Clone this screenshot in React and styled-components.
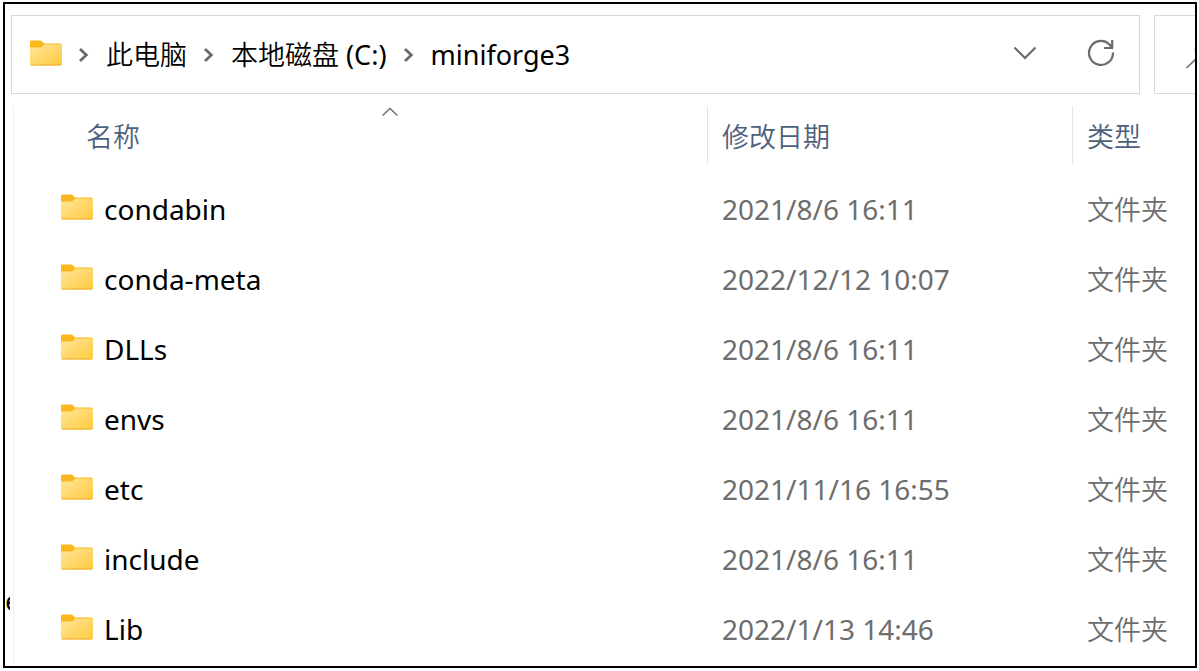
import React from "react";
import styled, { createGlobalStyle } from "styled-components";

const GlobalStyle = createGlobalStyle`
  *, *::before, *::after { box-sizing: border-box; }
  body {
    margin: 0;
    background: #fff;
    color: #000;
    font-family: "Noto Sans", "Noto Sans CJK SC", sans-serif;
    font-size: 28px;
    line-height: 40px;
  }
  button {
    padding: 0;
    border: 0;
    background: none;
    color: inherit;
    font: inherit;
    text-align: left;
    cursor: pointer;
  }
  svg { display: block; flex: none; }
`;

const Page = styled.div`
  padding: 2px 2px 2px 3px;
`;

const Window = styled.main`
  border: 2px solid #000;
  padding: 11px 0 2px;
  overflow: hidden;
`;

const Toolbar = styled.header`
  display: flex;
  gap: 14px;
  padding-left: 6px;
`;

const AddressBar = styled.div`
  flex: 1;
  display: flex;
  align-items: center;
  height: 79px;
  padding: 0 24px 0 18px;
  border: 1px solid #d9d9d9;
`;

const Crumbs = styled.nav`
  flex: 1;
  display: flex;
  align-items: center;
  font-size: 27px;
`;

const Separator = styled.svg`
  margin: 0 17px 0 16px;
`;

const Cjk = styled.span`
  font-family: "Noto Sans CJK SC", sans-serif;
  font-size: 27px;
  font-weight: 350;
`;

const Actions = styled.div`
  display: flex;
  align-items: center;
  gap: 50px;
  padding-bottom: 4px;
`;

const SearchBox = styled.label`
  display: flex;
  align-items: center;
  width: 41px;
  height: 79px;
  padding-left: 30px;
  border: 1px solid #d9d9d9;
  border-right: 0;
  overflow: hidden;
`;

const SearchInput = styled.input`
  width: 0;
  padding: 0;
  border: 0;
`;

const Body = styled.div`
  display: flex;
  padding-top: 12px;
`;

const NavPane = styled.aside`
  width: 5px;
  margin-right: 3px;
  padding-top: 474px;
  overflow: hidden;
`;

const Files = styled.section`
  flex: 1;
  border-left: 1px solid #f0f0f0;
`;

const Table = styled.table`
  width: 100%;
  table-layout: fixed;
  border-collapse: collapse;
`;

const HeadCell = styled.th`
  width: ${(p) => p.$width || "auto"};
  height: 68px;
  padding: 0 0 0 ${(p) => (p.$name ? "57px" : "0")};
  vertical-align: top;
  font-weight: 400;
  color: #4c607a;
`;

const SortButton = styled.button`
  position: relative;
  width: 100%;
  height: 58px;
  padding: 2px 0 0 14px;
  border-left: 1px solid ${(p) => (p.$plain ? "transparent" : "#e5e5e5")};
`;

const SortArrow = styled.svg`
  position: absolute;
  top: 1px;
  left: 50%;
  transform: translateX(-50%);
`;

const Cell = styled.td`
  height: 70px;
  padding: 0 0 0 ${(p) => (p.$name ? "47px" : "15px")};
  color: #6d6d6d;
  white-space: nowrap;
`;

const FileLink = styled.a`
  display: flex;
  align-items: center;
  gap: 11px;
  color: #000;
  text-decoration: none;
`;

const FolderSlot = styled.span`
  padding-bottom: 4px;
`;

function FolderIcon() {
  return (
    <svg width="32" height="26" viewBox="0 0 33 26" preserveAspectRatio="none" aria-hidden="true">
      <defs>
        <linearGradient id="folderFront" x1="0" y1="0" x2="1" y2="1">
          <stop offset="0" stopColor="#ffe69a" />
          <stop offset="1" stopColor="#ffca3e" />
        </linearGradient>
      </defs>
      <path d="M0 1.500Q0 0.500 1.500 0.500H10.500Q11.500 0.500 12.300 1.300L14.500 3.500H31Q33 3.500 33 5V12H0Z" fill="#fab81e" />
      <path d="M0 7.500H10.500Q11.800 7.500 12.700 6.500L14.500 4.500H31.500Q33 4.500 33 5.500V24.500Q33 25.500 31.500 25.500H1.500Q0 25.500 0 24.500Z" fill="url(#folderFront)" />
      <path d="M1 25H32" stroke="#edb02f" strokeWidth="1" />
    </svg>
  );
}

function CrumbArrow() {
  return (
    <Separator width="11" height="16" viewBox="0 0 11 16" aria-hidden="true">
      <path d="M2 2L8.300 8L2 14" fill="none" stroke="#6b6b6b" strokeWidth="2.800" />
    </Separator>
  );
}

const FOLDERS = [
  ["condabin", "2021/8/6 16:11"],
  ["conda-meta", "2022/12/12 10:07"],
  ["DLLs", "2021/8/6 16:11"],
  ["envs", "2021/8/6 16:11"],
  ["etc", "2021/11/16 16:55"],
  ["include", "2021/8/6 16:11"],
  ["Lib", "2022/1/13 14:46"],
];

export default function App() {
  return (
    <Page>
      <GlobalStyle />
      <Window>
        <Toolbar>
          <AddressBar>
            <Crumbs aria-label="路径">
              <FolderSlot><FolderIcon /></FolderSlot>
              <CrumbArrow />
              <button type="button"><Cjk>此电脑</Cjk></button>
              <CrumbArrow />
              <button type="button"><Cjk>本地磁盘</Cjk> (C:)</button>
              <CrumbArrow />
              <button type="button">miniforge3</button>
            </Crumbs>
            <Actions>
              <button type="button" aria-label="以前的位置">
                <svg width="24" height="16" viewBox="0 0 24 16">
                  <path d="M1.500 2.500L12 13L22.500 2.500" fill="none" stroke="#6b6b6b" strokeWidth="2.200" />
                </svg>
              </button>
              <button type="button" aria-label="刷新">
                <svg width="28" height="28" viewBox="0 0 28 28">
                  <path d="M26 13.500A12 12 0 1 1 22 5L25 8.500M25.200 1V9H17" fill="none" stroke="#6b6b6b" strokeWidth="2.200" />
                </svg>
              </button>
            </Actions>
          </AddressBar>
          <SearchBox>
            <svg width="32" height="32" viewBox="0 0 32 32" aria-hidden="true">
              <path d="M1.500 29L13 18" fill="none" stroke="#6b6b6b" strokeWidth="1.500" />
              <circle cx="20" cy="11" r="9.500" fill="none" stroke="#6b6b6b" strokeWidth="1.500" />
            </svg>
            <SearchInput type="search" aria-label="搜索" />
          </SearchBox>
        </Toolbar>
        <Body>
          <NavPane>e</NavPane>
          <Files>
            <Table>
              <thead>
                <tr>
                  <HeadCell $name scope="col" aria-sort="ascending">
                    <SortButton $plain type="button">
                      <SortArrow width="17" height="10" viewBox="0 0 17 10" aria-hidden="true">
                        <path d="M1 8.500L8.500 1.500L16 8.500" fill="none" stroke="#6b6b6b" strokeWidth="1.300" />
                      </SortArrow>
                      <Cjk>名称</Cjk>
                    </SortButton>
                  </HeadCell>
                  <HeadCell $width="365px" scope="col">
                    <SortButton type="button"><Cjk>修改日期</Cjk></SortButton>
                  </HeadCell>
                  <HeadCell $width="123px" scope="col">
                    <SortButton type="button"><Cjk>类型</Cjk></SortButton>
                  </HeadCell>
                </tr>
              </thead>
              <tbody>
                {FOLDERS.map(([name, date]) => (
                  <tr key={name}>
                    <Cell $name>
                      <FileLink href={"#" + name}>
                        <FolderSlot><FolderIcon /></FolderSlot>
                        {name}
                      </FileLink>
                    </Cell>
                    <Cell>{date}</Cell>
                    <Cell><Cjk>文件夹</Cjk></Cell>
                  </tr>
                ))}
              </tbody>
            </Table>
          </Files>
        </Body>
      </Window>
    </Page>
  );
}
